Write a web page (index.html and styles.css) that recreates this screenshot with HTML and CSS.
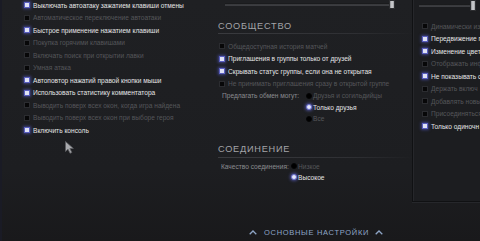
FILE: index.html
```html
<!DOCTYPE html>
<html lang="ru">
<head>
<meta charset="utf-8">
<title>Настройки</title>
<link rel="stylesheet" href="styles.css">
</head>
<body>
<div class="screen">
  <div class="main">
    <section class="col col-left">
      <ul class="list">
        <li class="row on"><span class="cb"></span>Выключать автоатаку зажатием клавиши отмены</li>
        <li class="row"><span class="cb"></span>Автоматическое переключение автоатаки</li>
        <li class="row on"><span class="cb"></span>Быстрое применение нажатием клавиши</li>
        <li class="row"><span class="cb"></span>Покупка горячими клавишами</li>
        <li class="row"><span class="cb"></span>Включать поиск при открытии лавки</li>
        <li class="row"><span class="cb"></span>Умная атака</li>
        <li class="row on"><span class="cb"></span>Автоповтор нажатий правой кнопки мыши</li>
        <li class="row on"><span class="cb"></span>Использовать статистику комментатора</li>
        <li class="row"><span class="cb"></span>Выводить поверх всех окон, когда игра найдена</li>
        <li class="row"><span class="cb"></span>Выводить поверх всех окон при выборе героя</li>
        <li class="row on"><span class="cb"></span>Включить консоль</li>
      </ul>
    </section>

    <section class="col col-mid">
      <div class="slider slider-mid"><div class="track"></div><div class="thumb"></div></div>

      <h2 class="heading">СООБЩЕСТВО</h2>
      <ul class="list list-mid">
        <li class="row"><span class="cb"></span>Общедоступная история матчей</li>
        <li class="row on"><span class="cb"></span>Приглашения в группы только от друзей</li>
        <li class="row on"><span class="cb"></span>Скрывать статус группы, если она не открытая</li>
        <li class="row"><span class="cb"></span>Не принимать приглашения сразу в открытой группе</li>
      </ul>
      <div class="radio-group trade">
        <span class="rg-label">Предлагать обмен могут:</span>
        <ul class="radios">
          <li class="radio"><span class="rd"></span>Друзья и согильдийцы</li>
          <li class="radio on"><span class="rd"></span>Только друзья</li>
          <li class="radio"><span class="rd"></span>Все</li>
        </ul>
      </div>

      <h2 class="heading heading-conn">СОЕДИНЕНИЕ</h2>
      <div class="radio-group conn">
        <span class="rg-label">Качество соединения:</span>
        <ul class="radios">
          <li class="radio"><span class="rd"></span>Низкое</li>
          <li class="radio on"><span class="rd"></span>Высокое</li>
        </ul>
      </div>
    </section>

    <section class="col col-right">
      <div class="slider slider-right"><div class="track"></div><div class="thumb"></div></div>
      <ul class="list list-right">
        <li class="row"><span class="cb"></span>Динамически изм</li>
        <li class="row on"><span class="cb"></span>Передвижение п</li>
        <li class="row on"><span class="cb"></span>Изменение цвета</li>
        <li class="row"><span class="cb"></span>Отображать инф</li>
        <li class="row on"><span class="cb"></span>Не показывать с</li>
        <li class="row"><span class="cb"></span>Держать включ</li>
        <li class="row"><span class="cb"></span>Добавлять новы</li>
        <li class="row"><span class="cb"></span>Присоединяться</li>
        <li class="row on"><span class="cb"></span>Только одиночн</li>
      </ul>
    </section>
  </div>

  <footer class="footer">
    <svg class="chev" width="8" height="5" viewBox="0 0 8 5" aria-hidden="true"><polyline points="0.7,4.3 4,1 7.3,4.3" fill="none" stroke="#8ea5c6" stroke-width="1.3"/></svg>
    <span class="footer-text">ОСНОВНЫЕ НАСТРОЙКИ</span>
    <svg class="chev" width="8" height="5" viewBox="0 0 8 5" aria-hidden="true"><polyline points="0.7,4.3 4,1 7.3,4.3" fill="none" stroke="#8ea5c6" stroke-width="1.3"/></svg>
  </footer>

  <svg class="cursor" width="11" height="13" viewBox="0 0 11 13" aria-hidden="true">
    <path d="M0.5 0.5 L0.5 10.5 L3 8.2 L5 12.3 L6.8 11.5 L4.9 7.5 L8.4 7.5 Z" fill="#a9aaae" stroke="#5c5d61" stroke-width="0.8"/>
  </svg>
</div>
</body>
</html>
```

FILE: styles.css
```css
* { box-sizing: border-box; }

html, body {
  margin: 0;
  padding: 0;
  background: #1d1e21;
}

.screen {
  position: relative;
  width: 480px;
  height: 241px;
  overflow: hidden;
  background: linear-gradient(#1f2023 0%, #1d1e21 70%, #19191b 100%);
  font-family: "Liberation Sans", Arial, sans-serif;
  font-size: 6.6px;
  color: #5a5b5f;
  border-left: 2px solid #1a1b25;
}

.main {
  display: flex;
  height: 202px;
}

ul { list-style: none; margin: 0; padding: 0; }

.col-left {
  width: 208px;
  padding-left: 22px;
}

.list { margin-top: -1.25px; }

.row {
  display: flex;
  align-items: center;
  height: 12.5px;
  white-space: nowrap;
  color: #55565a;
}

.row.on { color: #e4e4e6; }

.cb {
  flex: none;
  width: 6px;
  height: 6px;
  margin-right: 3px;
  background: #070708;
  border: 1px solid #2b2c30;
}

.row.on .cb {
  background: #dfe2f6;
  border-color: #5a5fc0;
  box-shadow: 0 0 3px 1px rgba(88, 94, 210, 0.55);
}

/* middle column */
.col-mid {
  width: 202px;
  padding-left: 8px;
  white-space: nowrap;
}

.slider {
  position: relative;
  height: 9px;
}

.slider .track {
  position: absolute;
  top: 3px;
  height: 3px;
  background: linear-gradient(#0c0d0e, #2e2f32 60%, #4a4b4f);
  border-bottom: 1px solid #3c3d41;
}

.slider .thumb {
  position: absolute;
  top: 0;
  width: 6px;
  height: 9px;
  background: linear-gradient(90deg, #8e8f93, #d4d5d8 50%, #9a9b9f);
  border: 1px solid #2d2e31;
}

.slider-mid .track { left: 7px; width: 168px; }
.slider-mid .thumb { left: 171px; }

.heading {
  margin: 12px 0 0 0;
  height: 13px;
  line-height: 10px;
  font-size: 9.2px;
  font-weight: normal;
  letter-spacing: 0.75px;
  color: #a3a4a8;
  border-bottom: 1px solid transparent;
  border-image: linear-gradient(90deg, #3a3b3f, #2e2f33 70%, rgba(46,47,51,0)) 1;
  width: 195px;
}

.list-mid {
  margin-top: 6px;
  padding-left: 1px;
}

.radio-group {
  display: flex;
  align-items: flex-start;
}

.rg-label {
  flex: none;
  height: 11.5px;
  line-height: 11.5px;
  color: #8b8c90;
}

.trade .rg-label { width: 88px; padding-left: 4px; }
.conn .rg-label { width: 73px; padding-left: 3px; }

.radio {
  display: flex;
  align-items: center;
  height: 11.5px;
  color: #55565a;
}

.radio.on { color: #e4e4e6; }

.rd {
  flex: none;
  width: 6px;
  height: 6px;
  border-radius: 50%;
  margin-right: 1px;
  background: #000;
  border: 1px solid #050506;
}

.radio.on .rd {
  background: #e4e6f8;
  border-color: #6a6fd0;
  box-shadow: 0 0 3px 1px rgba(100, 106, 220, 0.6);
}

.heading-conn {
  margin-top: 19px;
  height: 14px;
}

.conn { margin-top: 3px; }
.conn .radio { height: 11px; }

/* right panel */
.col-right {
  flex: 1;
  min-width: 0;
  overflow: hidden;
  white-space: nowrap;
  padding-left: 9px;
  background: #1c1d20;
  border-left: 1px solid #101113;
  border-bottom: 1px solid #101113;
  box-shadow: inset 1px 0 0 #26272b, 0 1px 0 #26272b;
}

.slider-right .track { left: -3px; width: 56px; top: 4px; }
.slider-right .thumb { left: 48px; height: 11px; top: 0; }
.slider-right { height: 11px; }

.list-right { margin-top: 8.75px; }

/* footer */
.footer {
  display: flex;
  align-items: center;
  height: 39px;
  padding-left: 247px;
  padding-top: 21px;
  color: #8ea5c6;
  font-size: 7.5px;
  letter-spacing: 0.7px;
}

.chev {
  flex: none;
  display: block;
}

.footer-text { margin: 0 6px 0 7px; }

.cursor {
  position: absolute;
  left: 63px;
  top: 141px;
}
```
